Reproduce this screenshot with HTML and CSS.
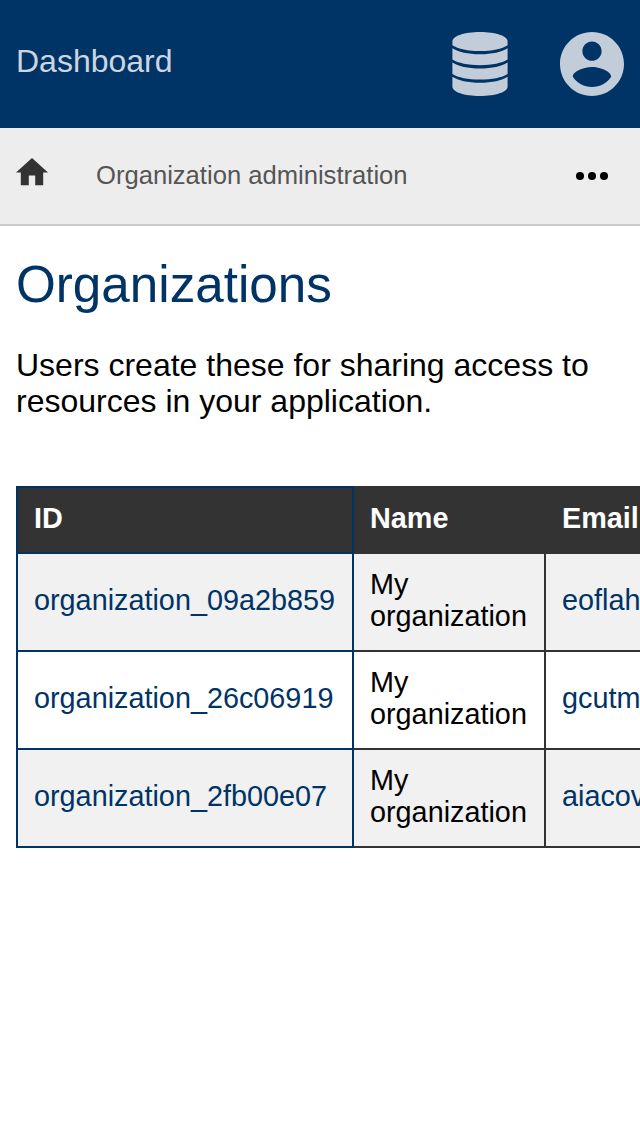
FILE: index.html
```html
<!DOCTYPE html>
<html lang="en">
<head>
<meta charset="utf-8">
<title>Organizations</title>
<link rel="stylesheet" href="styles.css">
</head>
<body>
<header class="topbar">
  <a class="brand">Dashboard</a>
  <nav class="tools">
    <svg class="icon-db" viewBox="0 0 56 64" aria-label="Database">
      <path d="M.4 9.500C.4 4 12.500 0 28 0s27.600 4 27.600 9.500v3.700C50 17 40 19 28 19S6 17 .4 13.200z"/>
      <path d="M.4 16.200C6 20 16 22.200 28 22.200s22-2.200 27.600-6v11.400C50 31.200 40 33.200 28 33.200S6 31.200.4 27.600z"/>
      <path d="M.4 30.500C6 34.300 16 36.500 28 36.500s22-2.200 27.600-6v11.400C50 45.500 40 47.500 28 47.500S6 45.500.4 41.900z"/>
      <path d="M.4 44.800C6 48.600 16 50.800 28 50.800s22-2.200 27.600-6v9.700C55.600 60 43.500 64 28 64S.4 60 .4 54.500z"/>
    </svg>
    <svg class="icon-user" viewBox="2 2 20 20" aria-label="Account">
      <path d="M12 2C6.480 2 2 6.480 2 12s4.480 10 10 10 10-4.480 10-10S17.520 2 12 2zm0 3c1.660 0 3 1.340 3 3s-1.340 3-3 3-3-1.340-3-3 1.340-3 3-3zm0 14.200c-2.500 0-4.710-1.280-6-3.220.03-1.990 4-3.080 6-3.080 1.990 0 5.970 1.090 6 3.080-1.290 1.940-3.500 3.220-6 3.220z"/>
    </svg>
  </nav>
</header>
<nav class="crumbs">
  <svg class="icon-home" viewBox="2 3 20 17" aria-label="Home"><path d="M10 20v-6h4v6h5v-8h3L12 3 2 12h3v8z"/></svg>
  <span class="crumb">Organization administration</span>
  <svg class="icon-more" viewBox="4 10 16 4" aria-label="More"><circle cx="6" cy="12" r="2"/><circle cx="12" cy="12" r="2"/><circle cx="18" cy="12" r="2"/></svg>
</nav>
<main class="content">
  <h1 class="title">Organizations</h1>
  <p class="intro">Users create these for sharing access to resources in your application.</p>
  <table class="list">
    <colgroup><col class="col-id"><col class="col-name"><col class="col-email"></colgroup>
    <thead>
      <tr><th class="key">ID</th><th>Name</th><th>Email</th></tr>
    </thead>
    <tbody>
      <tr><td class="key"><a>organization_09a2b859</a></td><td>My organization</td><td><a>eoflah</a></td></tr>
      <tr><td class="key"><a>organization_26c06919</a></td><td>My organization</td><td><a>gcutm</a></td></tr>
      <tr><td class="key"><a>organization_2fb00e07</a></td><td>My organization</td><td><a>aiacov</a></td></tr>
    </tbody>
  </table>
</main>
</body>
</html>
```
FILE: styles.css
```css
* { box-sizing: border-box; }
body {
  margin: 0;
  overflow: hidden;
  background: #fff;
  color: #000;
  font-family: "Liberation Sans", Arial, sans-serif;
  font-size: 32px;
  line-height: 36px;
}
svg { display: block; flex: none; }
.topbar {
  display: flex;
  justify-content: space-between;
  height: 128px;
  padding: 32px 16px;
  background: #003366;
}
.brand { padding-top: 11px; color: #ccd6e0; }
.tools { display: flex; gap: 52px; fill: #c2cdd9; }
.icon-db { width: 56px; height: 64px; }
.icon-user { width: 64px; height: 64px; }
.crumbs {
  display: flex;
  align-items: center;
  height: 98px;
  padding: 0 32px 0 16px;
  background: #ededed;
  border-bottom: 2px solid #ccc;
}
.icon-home { width: 32px; height: 27.2px; margin-top: -8px; fill: #333; }
.crumb { flex: 1; margin: 0 0 2px 48px; color: #555; font-size: 25.6px; line-height: 30px; }
.icon-more { width: 32px; height: 8px; }
.content { padding: 31px 16px 0; overflow: hidden; }
.title { margin: 0; color: #003366; font-size: 51.2px; font-weight: 400; line-height: 56px; }
.intro { margin: 34px 0 67px; }
.list {
  width: 720px;
  table-layout: fixed;
  border-collapse: collapse;
  font-size: 28.8px;
  line-height: 32px;
}
.col-id { width: 336px; }
.col-name { width: 192px; }
.list th, .list td {
  padding: 14px 16px 18px;
  border: 2px solid #333;
  text-align: left;
  vertical-align: middle;
}
.list th { background: #333; color: #fff; }
.list .key { border-color: #003366; }
.list tbody tr:nth-child(odd) { background: #f1f1f1; }
.list a { color: #003366; }
```
